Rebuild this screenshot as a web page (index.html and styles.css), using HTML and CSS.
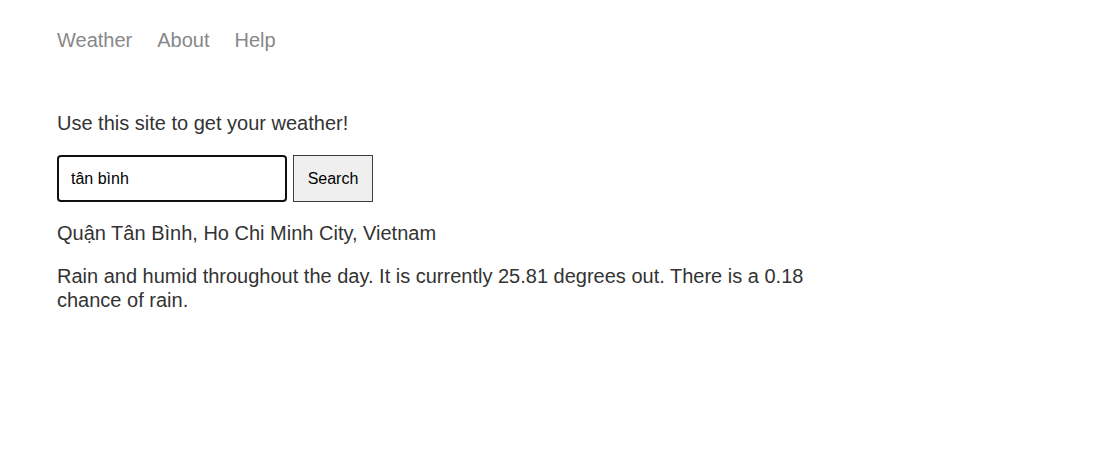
FILE: index.html
```html
<!DOCTYPE html>
<html lang="en">
<head>
<meta charset="utf-8">
<title>Weather</title>
<link rel="stylesheet" href="styles.css">
</head>
<body>
<div class="page">
  <header class="header">
    <nav class="nav">
      <a class="nav-link" href="#">Weather</a>
      <a class="nav-link" href="#">About</a>
      <a class="nav-link" href="#">Help</a>
    </nav>
  </header>
  <main class="main">
    <p class="intro">Use this site to get your weather!</p>
    <form class="search-form">
      <input class="search-input" type="text" value="tân bình">
      <button class="search-button" type="button">Search</button>
    </form>
    <p class="location">Quận Tân Bình, Ho Chi Minh City, Vietnam</p>
    <p class="forecast">Rain and humid throughout the day. It is currently 25.81 degrees out. There is a 0.18 chance of rain.</p>
  </main>
</div>
</body>
</html>
```

FILE: styles.css
```css
html, body {
  margin: 0;
  padding: 0;
  background: #ffffff;
}

body {
  font-family: "Liberation Sans", Arial, sans-serif;
  color: #333333;
}

.page {
  max-width: 780px;
  padding: 29px 0 0 57px;
}

.header {
  margin-bottom: 60px;
}

.nav {
  display: flex;
  gap: 25px;
  font-size: 20px;
  line-height: 23px;
}

.nav-link {
  color: #888888;
  text-decoration: none;
}

.main p {
  margin: 0;
  font-size: 20px;
  line-height: 23px;
}

.main .intro {
  margin-bottom: 20px;
}

.search-form {
  display: flex;
  gap: 6px;
  margin-bottom: 20px;
}

.search-input {
  box-sizing: border-box;
  width: 230px;
  height: 47px;
  border: 2px solid #101010;
  border-radius: 4px;
  padding: 0 12px;
  font-family: "Liberation Sans", Arial, sans-serif;
  font-size: 16px;
  color: #000000;
  outline: none;
}

.search-button {
  box-sizing: border-box;
  width: 80px;
  height: 47px;
  border: 1px solid #3c3c3c;
  border-radius: 0;
  background: #efefef;
  font-family: "Liberation Sans", Arial, sans-serif;
  font-size: 16px;
  color: #000000;
  padding: 0;
}

.main .location {
  margin-bottom: 19px;
}

.main .forecast {
  line-height: 24px;
}
```
